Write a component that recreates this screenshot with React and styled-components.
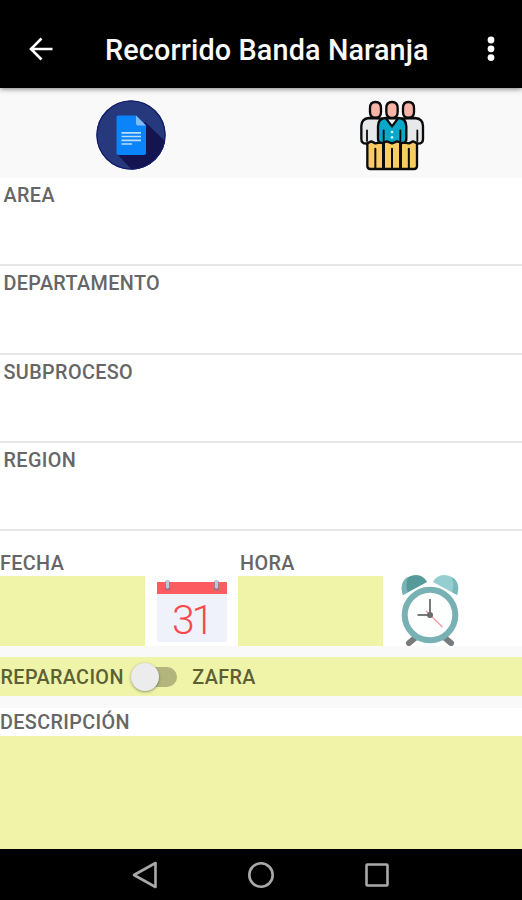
import React from 'react'
import styled, { createGlobalStyle } from 'styled-components'

const fields = ['AREA', 'DEPARTAMENTO', 'SUBPROCESO', 'REGION']

const DocumentIcon = () => (
  <svg width="70" height="70" viewBox="0 0 70 70">
    <defs>
      <clipPath id="disc">
        <circle cx="35" cy="35" r="34.7" />
      </clipPath>
    </defs>
    <g clipPath="url(#disc)">
      <rect width="70" height="70" fill="#25397c" />
      <path d="M49 22 L72 44 V72 H38 L21 54 Z" fill="#131450" />
    </g>
    <circle cx="35" cy="35" r="34" fill="none" stroke="#151c68" strokeWidth="1.2" />
    <path d="M22.5 15.5 H40 L50 25.5 V53 Q50 55 48 55 H22.5 Q20.5 55 20.5 53 V17.5 Q20.5 15.5 22.5 15.5 Z" fill="#0a84fa" />
    <path d="M40 15.5 L50 25.5 H42 Q40 25.5 40 23.5 Z" fill="#7fbcf6" />
    <path d="M25.5 32.8 H45 M25.5 36.5 H45 M25.5 40.3 H45 M25.5 44 H36" stroke="#b9dcff" strokeWidth="1.7" />
  </svg>
)

const PeopleIcon = () => (
  <svg width="65" height="71" viewBox="45 28 195 213">
    <g stroke="#0b0b0b" strokeWidth="7" strokeLinejoin="round" strokeLinecap="round">
      <path d="M67 150 H216 V226 Q216 235 207 235 H76 Q67 235 67 226 Z" fill="#f9cb63" />
      <path d="M115.5 158 V233 M166.5 158 V233" fill="none" strokeWidth="9" />
      <path d="M91 174 V233 M141 174 V233 M191.5 174 V233" fill="none" strokeWidth="6" />
      <path d="M72 82 Q49 84 49 106 V145 Q49 159 64 159 L79 152 L91 158 L112 154 V84 Z" fill="#e6e8ea" />
      <path d="M210 82 Q234 84 234 106 V145 Q234 159 219 159 L204 152 L192 158 L169 154 V84 Z" fill="#e6e8ea" />
      <path d="M75 52 Q75 34 91.5 34 Q108 34 108 52 V64 Q108 81 91.5 81 Q75 81 75 64 Z" fill="#f8b5a7" />
      <path d="M174 52 Q174 34 190 34 Q207 34 207 52 V64 Q207 81 190 81 Q174 81 174 64 Z" fill="#f8b5a7" />
      <path d="M122 82 Q99 83 99 107 V145 Q99 157 112 157 L126 152 L141 158 L156 152 L171 157 Q184 157 184 145 V107 Q184 83 160 82 Z" fill="#09a8c8" />
      <path d="M123 83 L141 107 L159 83 Z" fill="#f2f4f5" />
      <path d="M124 52 Q124 34 141 34 Q158 34 158 52 V64 Q158 82 141 82 Q124 82 124 64 Z" fill="#f8b5a7" />
      <path d="M66 119 V151 M116 119 V151 M166 119 V151 M217 119 V151" fill="none" strokeWidth="5.5" />
    </g>
    <circle cx="141" cy="124" r="4" fill="#c8f4fa" />
    <circle cx="141" cy="140" r="4" fill="#c8f4fa" />
  </svg>
)

const CalendarIcon = () => (
  <svg width="70" height="64" viewBox="0 0 70 64">
    <rect y="3" width="70" height="60" rx="1" fill="#eff2fa" />
    <path d="M0 4 Q0 3 1 3 H69 Q70 3 70 4 V15 H0 Z" fill="#fc5c60" />
    <path d="M10.5 4 V9 M59.5 4 V9" stroke="#93717f" strokeWidth="5" strokeLinecap="round" />
    <path d="M10.5 2.5 V8 M59.5 2.5 V8" stroke="#bfc6dc" strokeWidth="3.4" strokeLinecap="round" />
    <CalendarDay x="34.5" y="55">31</CalendarDay>
  </svg>
)

const ClockIcon = () => (
  <svg width="58" height="72" viewBox="0 0 58 72">
    <path d="M14 64 L8 69 M44 64 L50 69" stroke="#777b7d" strokeWidth="6" strokeLinecap="round" />
    <path d="M2 21 C-3 7 8 1 15 1 C20 1 24 4 26 8 Z" fill="#56999a" />
    <path d="M2 21 C-1 12 2 5 7 3 C5 8 5 14 7 18 Z" fill="#78b4b6" />
    <path d="M56 21 C61 7 50 1 43 1 C38 1 34 4 32 8 Z" fill="#94ced0" />
    <path d="M56 21 C59 12 56 5 50 3 C53 8 53 13 51 18 Z" fill="#7ab8ba" />
    <circle cx="29" cy="41" r="25.3" fill="#fdfefe" stroke="#78b1b3" strokeWidth="6" />
    <path d="M25 37 L41.5 53" stroke="#f09aa3" strokeWidth="1.3" />
    <path d="M29 25 V41 H16.5" fill="none" stroke="#77797b" strokeWidth="2" />
    <circle cx="29" cy="41" r="3" fill="#656a6c" />
  </svg>
)

const App = () => {
  return (
    <Screen>
      <GlobalStyle />
      <Header>
        <IconButton aria-label="Volver">
          <svg width="24" height="24" viewBox="0 0 24 24" fill="none" stroke="#fff" strokeWidth="2.6">
            <path d="M23.5 12 H2 M12.5 1.5 L2 12 L12.5 22.5" />
          </svg>
        </IconButton>
        <Title>Recorrido Banda Naranja</Title>
        <IconButton aria-label="Menu">
          <svg width="8" height="26" viewBox="0 0 8 26" fill="#fff">
            <circle cx="4" cy="4" r="3.4" />
            <circle cx="4" cy="12.8" r="3.4" />
            <circle cx="4" cy="21.6" r="3.4" />
          </svg>
        </IconButton>
      </Header>
      <Actions>
        <DocumentIcon />
        <PeopleIcon />
      </Actions>
      {fields.map(name => (
        <Field key={name}>
          <Label>{name}</Label>
        </Field>
      ))}
      <DateTime>
        <Group>
          <Label $indent="0">FECHA</Label>
          <InputBox />
        </Group>
        <CalendarIcon />
        <Group>
          <Label $indent="2px">HORA</Label>
          <InputBox />
        </Group>
        <ClockIcon />
      </DateTime>
      <SwitchRow>
        <Label $color="#5d5f35">REPARACION</Label>
        <Toggle>
          <Knob />
        </Toggle>
        <Label $color="#5d5f35">ZAFRA</Label>
      </SwitchRow>
      <Description>
        <Label $indent="0">DESCRIPCIÓN</Label>
      </Description>
      <TextArea />
      <NavBar>
        <svg width="26" height="28" viewBox="0 0 26 28">
          <path d="M23.5 2 V26 L2 14 Z" />
        </svg>
        <svg width="28" height="28" viewBox="0 0 28 28">
          <circle cx="14" cy="14" r="11.7" />
        </svg>
        <svg width="26" height="26" viewBox="0 0 26 26">
          <rect x="2.5" y="2.5" width="21" height="21" rx="1" />
        </svg>
      </NavBar>
    </Screen>
  )
}

const GlobalStyle = createGlobalStyle`
  * {
    box-sizing: border-box;
  }

  body {
    margin: 0;
    background: #faf9fa;
    font-family: Roboto, sans-serif;
  }

  svg {
    display: block;
    flex-shrink: 0;
  }
`

const Screen = styled.main`
  display: flex;
  flex-direction: column;
  width: 522px;
  height: 900px;
  overflow: hidden;
`

const Header = styled.header`
  display: flex;
  align-items: center;
  flex-shrink: 0;
  height: 88px;
  padding: 9px 27.5px 0 29px;
  background: #000;
  box-shadow: 0 1px 5px rgba(0, 0, 0, 0.5);
  z-index: 1;
`

const IconButton = styled.button`
  padding: 0;
  border: 0;
  background: transparent;
`

const Title = styled.h1`
  flex: 1;
  margin: 3px 0 0 52px;
  color: #fafafa;
  font-size: 28.8px;
  font-weight: 500;
  line-height: 34px;
  letter-spacing: 0.12px;
  white-space: nowrap;
`

const Actions = styled.div`
  display: flex;
  justify-content: space-between;
  flex-shrink: 0;
  height: 90px;
  padding: 12px 97px 0 96px;
`

const Label = styled.span`
  padding-left: ${ ({ $indent }) => $indent || '0.5px' };
  color: ${ ({ $color }) => $color || '#666' };
  font-size: 19.8px;
  font-weight: 500;
  line-height: 24px;
  letter-spacing: 0.38px;
  white-space: nowrap;
`

const Field = styled.div`
  flex-shrink: 0;
  height: 88.3px;
  padding: 6px 3px 0;
  border-bottom: 2px solid #e6e6e6;
  background: #fff;
`

const DateTime = styled.section`
  display: flex;
  align-items: flex-end;
  flex-shrink: 0;
  height: 114.8px;
  background: #fff;

  & > svg:nth-of-type(1) {
    margin: 0 11px 3px 12px;
  }

  & > svg:nth-of-type(2) {
    margin-left: 18px;
  }
`

const Group = styled.div`
  display: flex;
  flex-direction: column;
  width: 145px;
`

const InputBox = styled.div`
  height: 70px;
  background: #f0f4a9;
`

const CalendarDay = styled.text`
  fill: #f9494c;
  font-family: Roboto, sans-serif;
  font-size: 41px;
  font-weight: 300;
  letter-spacing: -3.2px;
  text-anchor: middle;
`

const SwitchRow = styled.div`
  display: flex;
  align-items: center;
  flex-shrink: 0;
  height: 39px;
  margin: 11px 0 12px;
  padding-top: 3px;
  background: #f0f4a9;
`

const Toggle = styled.div`
  display: flex;
  align-items: center;
  width: 43px;
  height: 20px;
  margin: -2px 15px 0 10px;
  border-radius: 10px;
  background: #b2b67d;
`

const Knob = styled.span`
  flex-shrink: 0;
  width: 28px;
  height: 28px;
  margin-left: -3px;
  border-radius: 50%;
  background: #ececec;
  box-shadow: 0 1px 3px rgba(0, 0, 0, 0.4);
`

const Description = styled.div`
  flex-shrink: 0;
  height: 28px;
  padding-top: 3px;
  background: #fff;
`

const TextArea = styled.div`
  flex: 1;
  background: #f1f3a9;
`

const NavBar = styled.nav`
  display: flex;
  align-items: center;
  justify-content: space-between;
  flex-shrink: 0;
  height: 51px;
  padding: 0 132px;
  background: #000;

  svg {
    fill: none;
    stroke: #a9a9a9;
    stroke-width: 2.6;
    stroke-linejoin: round;
  }
`

export default App
